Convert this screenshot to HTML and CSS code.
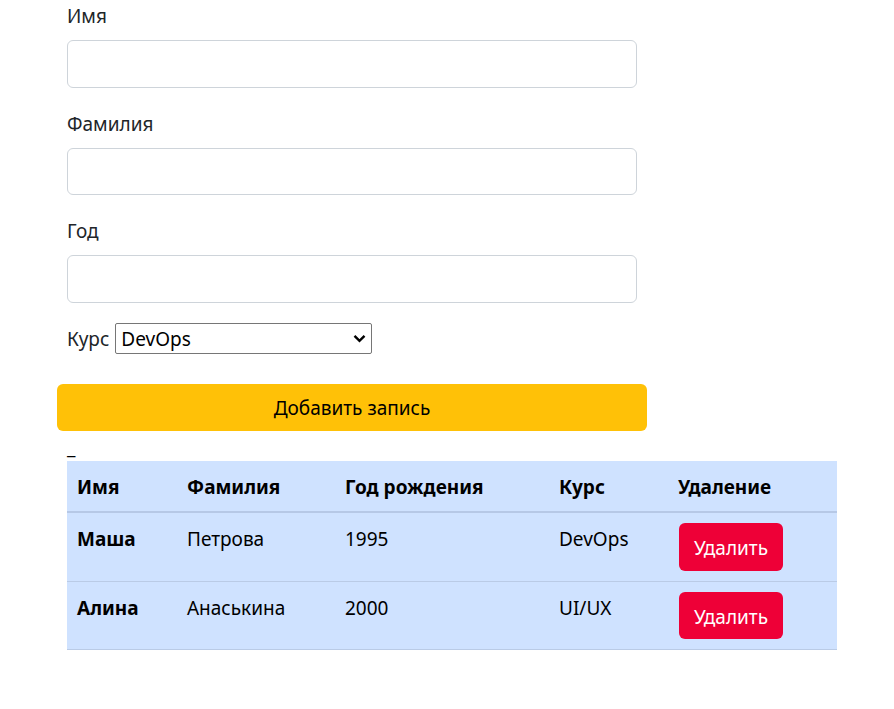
FILE: index.html
```html
<!DOCTYPE html>
<html lang="ru">
<head>
<meta charset="utf-8">
<title>Студенты</title>
<link rel="stylesheet" href="styles.css">
</head>
<body>
<main class="page">
  <form class="form">
    <div class="field">
      <label class="label">Имя</label>
      <input class="input" type="text">
    </div>
    <div class="field">
      <label class="label">Фамилия</label>
      <input class="input" type="text">
    </div>
    <div class="field">
      <label class="label">Год</label>
      <input class="input" type="text">
    </div>
    <div class="course">
      <label class="course-label">Курс</label>
      <div class="select">
        <span>DevOps</span>
        <svg class="chev" width="13" height="9" viewBox="0 0 13 9"><path d="M1.5 1.8 L6.5 6.8 L11.5 1.8" fill="none" stroke="#000" stroke-width="2.4"/></svg>
      </div>
    </div>
    <button type="button" class="add">Добавить запись</button>
  </form>
  <div class="stray">_</div>
  <table class="table">
    <colgroup>
      <col class="c1"><col class="c2"><col class="c3"><col class="c4"><col class="c5">
    </colgroup>
    <thead>
      <tr><th>Имя</th><th>Фамилия</th><th>Год рождения</th><th>Курс</th><th>Удаление</th></tr>
    </thead>
    <tbody>
      <tr><th>Маша</th><td>Петрова</td><td>1995</td><td>DevOps</td><td><button type="button" class="del">Удалить</button></td></tr>
      <tr><th>Алина</th><td>Анаськина</td><td>2000</td><td>UI/UX</td><td><button type="button" class="del">Удалить</button></td></tr>
    </tbody>
  </table>
</main>
</body>
</html>
```
FILE: styles.css
```css
* { box-sizing: border-box; }
body {
  margin: 0;
  background: #fff;
  color: #212529;
  font-family: "Noto Sans", "Open Sans", sans-serif;
  font-size: 19px;
  line-height: 30px;
}
.page { padding-left: 57px; }
.form { width: 590px; }
.field { margin: 0 10px 20px; }
.label {
  display: block;
  margin-bottom: 10px;
  height: 30px;
  padding-top: 3px;
  line-height: 27px;
}
.input {
  display: block;
  width: 100%;
  height: 47.5px;
  border: 1.25px solid #ced4da;
  border-radius: 6px;
  background: #fff;
  font: inherit;
}
.course {
  margin: 0 10px;
  display: flex;
  align-items: center;
  gap: 6px;
  height: 31px;
  padding-top: 2px;
}
.course-label { color: #212529; }
.select {
  width: 257px;
  height: 31px;
  margin-top: -2px;
  border: 1px solid #767676;
  border-radius: 2px;
  display: flex;
  align-items: center;
  justify-content: space-between;
  padding: 2px 5px 0 5px;
  color: #000;
}
.chev { margin-top: -2px; }
.add {
  display: block;
  width: 590px;
  height: 47.5px;
  margin-top: 30px;
  padding-top: 3px;
  border: none;
  border-radius: 6px;
  background: #ffc107;
  color: #000;
  font: inherit;
}
.stray { margin-left: 10px; height: 30px; color: #000; padding-top: 2px; line-height: 28px; }
.table {
  margin-left: 10px;
  width: 770px;
  table-layout: fixed;
  border-collapse: collapse;
  background: #cfe2ff;
  color: #000;
}
.c1 { width: 110px; }
.c2 { width: 158px; }
.c3 { width: 214px; }
.c4 { width: 119px; }
.c5 { width: 169px; }
.table th, .table td {
  padding: 11px 10px 9px;
  text-align: left;
  vertical-align: top;
  border-bottom: 1.25px solid #bacbe6;
}
.table th { font-weight: 700; }
.table td { font-weight: 400; }
.table td:last-child { padding-top: 10px; padding-bottom: 10px; }
.table thead th { border-bottom: 2.5px solid #b6c8e6; }
.del {
  display: block;
  height: 47.5px;
  padding: 3px 15px 0;
  margin-left: 1px;
  border: none;
  border-radius: 6px;
  background: #ee0037;
  color: #fff;
  font: inherit;
}
```
